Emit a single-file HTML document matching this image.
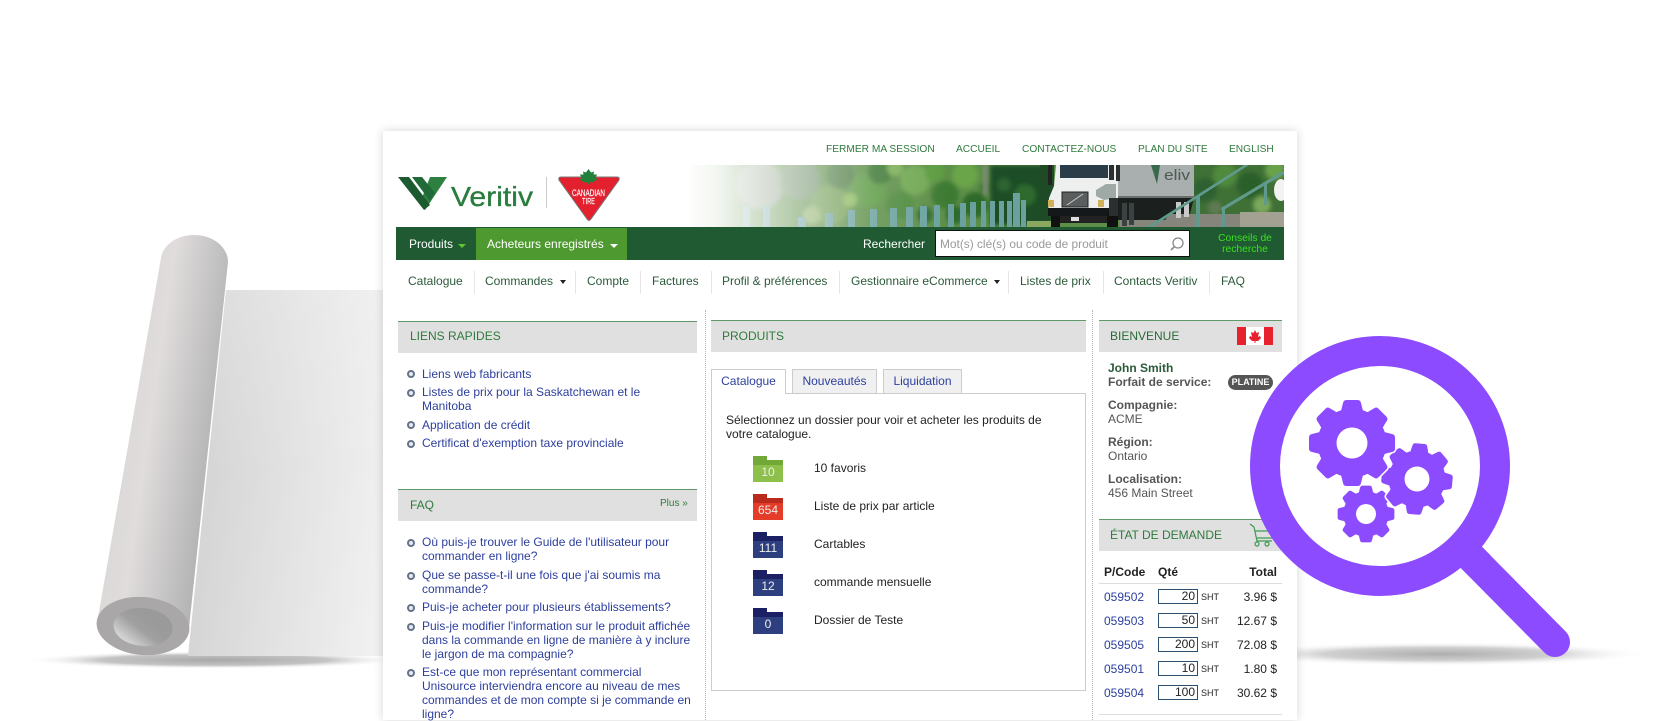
<!DOCTYPE html>
<html lang="fr"><head><meta charset="utf-8"><title>Veritiv</title>
<style>
html,body{margin:0;padding:0;background:#fff}
body{width:1680px;height:720px;overflow:hidden;position:relative;font-family:"Liberation Sans",Arial,sans-serif;font-size:12px;color:#222}
svg{position:absolute;left:0;top:0}
#panel{position:absolute;left:383px;top:131px;width:914px;height:589px;background:#fff;box-shadow:0 0 9px rgba(0,0,0,.17)}
#c{position:absolute;left:0;top:0;width:1680px;height:720px;filter:blur(.3px)}
.t{position:absolute;white-space:nowrap;line-height:14px}
.top{font-size:10.2px;color:#2f7a3d;line-height:12px;top:144px}
.nav{font-size:12px;color:#2a5a3a;top:274px}
.sep{position:absolute;width:1px;top:271px;height:23px;background:#e6e6e6}
.hd{position:absolute;background:#e0e0e0;border-top:1px solid #5f9b68;height:31px}
.ht{font-size:12px;color:#2f7a3d;position:absolute;white-space:nowrap;line-height:14px}
.l{color:#2d3f9e;font-size:12px}
.b{position:absolute;width:4px;height:4px;border:2px solid #64738a;border-radius:50%;background:#e6ebf2}
.dot{position:absolute;top:310px;height:410px;width:0;border-left:1px dotted #b5b5b5}
.tab{position:absolute;top:369px;height:23px;background:#f0f0f0;border:1px solid #ccc;border-bottom:none;color:#2d3f9e;text-align:center;line-height:23px;font-size:12px;box-sizing:content-box}
.f{position:absolute;left:753px;width:30px;height:22px;color:#eee;text-align:center;font-size:12px;line-height:24px}
.f i{position:absolute;left:0;top:-4px;width:14px;height:4px}
.f b{position:absolute;left:0;top:0;width:30px;height:5px}
.f span{position:relative}
.g i,.g b{background:#72a838}.g{background:#8cc04b}
.r i,.r b{background:#b92b1c}.r{background:#e53c29}
.n i,.n b{background:#1b1f63}.n{background:#2e3f80}
.lab{left:814px;font-size:12px;color:#222}
.s{font-weight:bold;color:#555;font-size:12px}
.v{color:#555;font-size:12px}
.code{left:1104px;color:#2d3f9e;font-size:12px}
.inp{position:absolute;left:1158px;width:38px;height:13px;border:1px solid #2b4d6e;font-size:12px;line-height:13px;text-align:right;color:#222}
.inp span{padding-right:2px}
.sht{left:1201px;font-size:9px;color:#222}
.tot{right:403px;font-size:12px;color:#222}
</style></head><body>

<svg width="1680" height="720" viewBox="0 0 1680 720">
<defs>
<filter id="bl" x="-20%" y="-200%" width="140%" height="500%"><feGaussianBlur stdDeviation="3"/></filter>
<linearGradient id="sheet" gradientUnits="userSpaceOnUse" x1="190" y1="500" x2="383" y2="520"><stop offset="0" stop-color="#d3d3d3"/><stop offset=".5" stop-color="#e2e2e2"/><stop offset="1" stop-color="#f0f0f0"/></linearGradient>
<linearGradient id="sheetT" x1="0" y1="0" x2="0" y2="1"><stop offset="0" stop-color="#fff" stop-opacity=".22"/><stop offset=".5" stop-color="#fff" stop-opacity="0"/></linearGradient>
<linearGradient id="tube" gradientUnits="userSpaceOnUse" x1="120" y1="440" x2="211" y2="453"><stop offset="0" stop-color="#dbd8d8"/><stop offset=".3" stop-color="#e0dcdc"/><stop offset=".6" stop-color="#cdcbcb"/><stop offset="1" stop-color="#b5b5b5"/></linearGradient>
<linearGradient id="hole" x1="0" y1="1" x2="1" y2="0"><stop offset="0" stop-color="#f2f2f2"/><stop offset=".45" stop-color="#a0a0a0"/><stop offset=".6" stop-color="#9b9b9b"/><stop offset="1" stop-color="#999"/></linearGradient>
<radialGradient id="shL"><stop offset="0" stop-color="#a8a8a8"/><stop offset=".6" stop-color="#c4c4c4"/><stop offset="1" stop-color="#fff" stop-opacity="0"/></radialGradient>
<radialGradient id="shR"><stop offset="0" stop-color="#aeaeae"/><stop offset=".55" stop-color="#d0d0d0"/><stop offset="1" stop-color="#fff" stop-opacity="0"/></radialGradient>
</defs>
<ellipse cx="215" cy="660" rx="190" ry="9" fill="url(#shL)"/>
<polygon points="226,290 383,290 383,656 188,656" fill="url(#sheet)"/>
<polygon points="226,290 383,290 383,656 188,656" fill="url(#sheetT)"/>
<path d="M161 258C163 245 177 235 194 235C213 235 228 247 228 262L189 628L97 623Z" fill="url(#tube)"/>
<ellipse cx="143" cy="626" rx="46.5" ry="29" fill="#a9a7a7" transform="rotate(5 143 626)"/>
<ellipse cx="143" cy="627" rx="29.5" ry="19" fill="url(#hole)" transform="rotate(5 143 627)"/>
<ellipse cx="1440" cy="654" rx="210" ry="12" fill="url(#shR)"/>
</svg>

<div id="panel"></div>
<div id="c">
<!-- top links -->
<div class="t top" style="left:826px">FERMER MA SESSION</div>
<div class="t top" style="left:956px">ACCUEIL</div>
<div class="t top" style="left:1022px">CONTACTEZ-NOUS</div>
<div class="t top" style="left:1138px">PLAN DU SITE</div>
<div class="t top" style="left:1229px">ENGLISH</div>

<!-- logo + banner -->
<svg width="1680" height="720" viewBox="0 0 1680 720">
<defs>
<linearGradient id="fade" gradientUnits="userSpaceOnUse" x1="686" y1="0" x2="950" y2="0"><stop offset="0" stop-color="#fff"/><stop offset=".12" stop-color="#fff" stop-opacity=".92"/><stop offset=".4" stop-color="#fff" stop-opacity=".55"/><stop offset=".72" stop-color="#fff" stop-opacity=".15"/><stop offset="1" stop-color="#fff" stop-opacity="0"/></linearGradient>
<clipPath id="bn"><rect x="686" y="165" width="598" height="62"/></clipPath>
<filter id="sb"><feGaussianBlur stdDeviation="2"/></filter>
<filter id="sb2"><feGaussianBlur stdDeviation=".6"/></filter>
</defs>
<polygon points="430,177 447,177 425,210 420,203" fill="#2e8040"/>
<polygon points="398,177 409,177 430,205 424,210" fill="#1c5b30"/>
<polygon points="412,177 422,177 435,193 430,201" fill="#1f6a36"/>
<text x="451" y="206" font-family="Liberation Sans" font-size="28" fill="#2a7d3f" stroke="#2a7d3f" stroke-width=".35" textLength="82" lengthAdjust="spacingAndGlyphs">Veritiv</text>
<rect x="546" y="177" width="1" height="31" fill="#ccc"/>
<path d="M561 177H617Q620 177 619 180L591 219Q589 222 587 219L559 180Q558 177 561 177Z" fill="#e5202e" stroke="#777" stroke-width="1"/>
<path d="M588.500 169L591 172.500L594 171.500L593.500 174.500L597 174.500L595.500 178L597.500 179.500L592.500 182.500L589.300 182V184H587.700V182L584.500 182.500L579.500 179.500L581.500 178L580 174.500L583.500 174.500L583 171.500L586 172.500Z" fill="#22803a"/>
<text x="572" y="196" font-family="Liberation Sans" font-size="9.500" fill="#fff" stroke="#fff" stroke-width=".15" textLength="33" lengthAdjust="spacingAndGlyphs">CANADIAN</text>
<text x="582" y="204" font-family="Liberation Sans" font-size="8.500" fill="#fff" stroke="#fff" stroke-width=".15" textLength="13" lengthAdjust="spacingAndGlyphs">TIRE</text>

<g clip-path="url(#bn)">
<rect x="686" y="165" width="598" height="62" fill="#5d8f48"/>
<g filter="url(#sb)">
<circle cx="760" cy="185" r="24" fill="#8d9f86"/><circle cx="800" cy="180" r="20" fill="#6e8f68"/><circle cx="830" cy="205" r="20" fill="#6f9c52"/>
<circle cx="840" cy="175" r="14" fill="#4f7d45"/><circle cx="868" cy="190" r="18" fill="#5d9a44"/><circle cx="880" cy="172" r="12" fill="#3f7a38"/>
<circle cx="900" cy="205" r="14" fill="#4d8a3e"/><circle cx="915" cy="180" r="15" fill="#71a852"/><circle cx="935" cy="172" r="10" fill="#5c9b3f"/>
<circle cx="945" cy="195" r="14" fill="#3e7a30"/><circle cx="965" cy="175" r="13" fill="#6ba548"/><circle cx="975" cy="205" r="13" fill="#2e6b2c"/>
<circle cx="812" cy="215" r="9" fill="#8fb06b"/><circle cx="850" cy="200" r="7" fill="#8ab95d"/><circle cx="925" cy="215" r="8" fill="#2f6a30"/>
<circle cx="955" cy="215" r="9" fill="#2f6b2f"/><circle cx="895" cy="168" r="8" fill="#7db059"/><circle cx="985" cy="188" r="6" fill="#477a3a"/>
</g>
<rect x="983" y="165" width="6" height="30" fill="#7f8c74" filter="url(#sb)"/>
<rect x="990" y="165" width="62" height="60" fill="#1f4d25" filter="url(#sb)"/>
<g filter="url(#sb)"><circle cx="1025" cy="195" r="11" fill="#2f6a2f"/><circle cx="1004" cy="185" r="7" fill="#2e6430"/></g>
<rect x="1027" y="221" width="28" height="6" fill="#8aa860"/>
<rect x="1040" y="165" width="14" height="55" fill="#1e4a25"/>
<rect x="1190" y="165" width="94" height="50" fill="#3f7035"/>
<g filter="url(#sb)"><circle cx="1205" cy="190" r="12" fill="#2f6030"/><circle cx="1225" cy="175" r="12" fill="#4f8a3e"/><circle cx="1250" cy="185" r="13" fill="#2c5e2a"/><circle cx="1275" cy="170" r="10" fill="#6ba24c"/><circle cx="1262" cy="205" r="9" fill="#7aa75a"/><circle cx="1215" cy="208" r="7" fill="#5e7a52"/></g>
<rect x="1120" y="214" width="164" height="13" fill="#85857c"/>
<rect x="1240" y="212" width="44" height="15" fill="#a3a292"/>
<g fill="#6aa19f">
<rect x="743" y="206" width="7" height="21"/><rect x="763" y="206" width="7" height="21"/><rect x="798" y="217" width="8" height="10"/><rect x="825" y="213" width="8" height="14"/><rect x="848" y="210" width="7" height="17"/><rect x="870" y="209" width="7" height="18"/><rect x="890" y="208" width="7" height="19"/><rect x="906" y="207" width="7" height="20"/><rect x="920" y="206" width="7" height="21"/><rect x="934" y="205" width="6" height="22"/><rect x="948" y="204" width="6" height="23"/><rect x="960" y="203" width="6" height="24"/><rect x="970" y="202" width="6" height="25"/><rect x="981" y="201" width="5" height="26"/><rect x="990" y="201" width="5" height="26"/><rect x="999" y="201" width="5" height="26"/><rect x="1007" y="201" width="5" height="26"/><rect x="1013" y="193" width="7" height="34"/><rect x="1021" y="200" width="5" height="27"/></g>
<!-- trailer -->
<rect x="1116" y="165" width="78" height="33" fill="#a9aeae"/>
<path d="M1151 165L1157 184L1160 165Z" fill="#37694a"/>
<text x="1164" y="180" font-family="Liberation Sans" font-size="15" fill="#4b5a52" textLength="26" lengthAdjust="spacingAndGlyphs">eliv</text>
<rect x="1116" y="196" width="78" height="2" fill="#6a6e6c"/>
<path d="M1118 198H1194L1190 214H1170L1165 220H1118Z" fill="#1b1f1e"/>
<rect x="1122" y="203" width="5" height="23" fill="#3a4342"/><rect x="1129" y="203" width="5" height="22" fill="#3a4342"/>
<rect x="1176" y="202" width="5" height="16" fill="#c9c9c9"/><rect x="1184" y="202" width="5" height="15" fill="#c9c9c9"/>
<!-- cab -->
<path d="M1056 165H1118V205L1116 214H1048L1049 198L1054 186Z" fill="#eef0f0"/>
<rect x="1060" y="165" width="48" height="13" fill="#2a3c48"/>
<rect x="1048" y="165" width="4" height="20" fill="#222"/><rect x="1109" y="165" width="5" height="15" fill="#2a2f30"/><rect x="1116" y="165" width="4" height="16" fill="#2a2f30"/>
<rect x="1062" y="192" width="26" height="15" fill="#5a5e5f" stroke="#222" stroke-width="1"/>
<path d="M1067 205L1083 194" stroke="#ccc"/>
<rect x="1048" y="208" width="70" height="8" fill="#15181a"/>
<rect x="1059" y="216" width="50" height="7" fill="#222"/>
<rect x="1051" y="216" width="9" height="11" fill="#111"/>
<rect x="1107" y="214" width="11" height="13" fill="#111"/>
<rect x="1071" y="217" width="8" height="4" fill="#ddd"/>
<rect x="1048" y="200" width="6" height="7" fill="#d3b15a"/><rect x="1098" y="200" width="6" height="7" fill="#d3b15a"/>
<path d="M1096 190L1106 184H1116V198L1104 200L1096 196Z" fill="#9fa9a6"/>
<rect x="1109" y="198" width="9" height="18" fill="#2b2f30"/>
<g fill="#5f9a8c">
<polygon points="1147,227 1244,165 1249,165 1152,227"/>
<rect x="1196" y="196" width="4" height="31"/>
<polygon points="1221,208 1281,172 1284,172 1284,174 1222,211"/>
<rect x="1222" y="207" width="3" height="20"/><rect x="1264" y="183" width="3" height="22"/>
</g>
<ellipse cx="1281" cy="190" rx="7" ry="11" fill="#f3f3f3"/>
<rect x="686" y="165" width="266" height="62" fill="url(#fade)"/>
</g>
</svg>

<!-- green bar -->
<div style="position:absolute;left:396px;top:227px;width:888px;height:33px;background:#1f5a33"></div>
<div style="position:absolute;left:476px;top:228px;width:151px;height:32px;background:#4e9a31"></div>
<div class="t" style="left:409px;top:237px;color:#fff;font-size:12px">Produits</div>
<div style="position:absolute;left:458px;top:244px;border:4px solid transparent;border-top:4px solid #5fc42f;border-bottom:0"></div>
<div class="t" style="left:487px;top:237px;color:#fff;font-size:12px">Acheteurs enregistrés</div>
<div style="position:absolute;left:610px;top:244px;border:4px solid transparent;border-top:4px solid #fff;border-bottom:0"></div>
<div class="t" style="left:863px;top:237px;color:#fff;font-size:12px">Rechercher</div>
<div style="position:absolute;left:935px;top:230px;width:253px;height:25px;background:#fff;border:1px solid #111"></div>
<div class="t" style="left:940px;top:237px;color:#999;font-size:11.900px">Mot(s) clé(s) ou code de produit</div>
<svg width="1680" height="720" viewBox="0 0 1680 720"><circle cx="1178" cy="243" r="5" fill="none" stroke="#888" stroke-width="1.3"/><path d="M1174 247L1171 250" stroke="#888" stroke-width="1.6"/></svg>
<div class="t" style="left:1212px;top:233px;width:66px;text-align:center;color:#3ee01f;font-size:10.300px;line-height:11px;white-space:normal">Conseils de recherche</div>

<!-- nav -->
<div class="t nav" style="left:408px">Catalogue</div><div class="sep" style="left:474px"></div>
<div class="t nav" style="left:485px">Commandes</div><div style="position:absolute;left:560px;top:280px;border:3.500px solid transparent;border-top:4px solid #222;border-bottom:0"></div><div class="sep" style="left:575px"></div>
<div class="t nav" style="left:587px">Compte</div><div class="sep" style="left:640px"></div>
<div class="t nav" style="left:652px">Factures</div><div class="sep" style="left:711px"></div>
<div class="t nav" style="left:722px">Profil &amp; préférences</div><div class="sep" style="left:839px"></div>
<div class="t nav" style="left:851px">Gestionnaire eCommerce</div><div style="position:absolute;left:994px;top:280px;border:3.500px solid transparent;border-top:4px solid #222;border-bottom:0"></div><div class="sep" style="left:1008px"></div>
<div class="t nav" style="left:1020px">Listes de prix</div><div class="sep" style="left:1103px"></div>
<div class="t nav" style="left:1114px">Contacts Veritiv</div><div class="sep" style="left:1209px"></div>
<div class="t nav" style="left:1221px">FAQ</div>

<div class="dot" style="left:705px"></div>
<div class="dot" style="left:1092px"></div>

<!-- left -->
<div class="hd" style="left:398px;top:321px;width:299px"></div>
<div class="ht" style="left:410px;top:329px">LIENS RAPIDES</div>
<div class="b" style="left:407px;top:370px"></div><div class="t l" style="left:422px;top:367px">Liens web fabricants</div>
<div class="b" style="left:407px;top:389px"></div><div class="t l" style="left:422px;top:385px">Listes de prix pour la Saskatchewan et le<br>Manitoba</div>
<div class="b" style="left:407px;top:421px"></div><div class="t l" style="left:422px;top:418px">Application de crédit</div>
<div class="b" style="left:407px;top:440px"></div><div class="t l" style="left:422px;top:436px">Certificat d'exemption taxe provinciale</div>

<div class="hd" style="left:398px;top:489px;width:299px"></div>
<div class="ht" style="left:410px;top:498px">FAQ</div>
<div class="t" style="left:660px;top:497px;font-size:10px;color:#2f7a3d">Plus »</div>
<div class="b" style="left:407px;top:539px"></div><div class="t l" style="left:422px;top:535px">Où puis-je trouver le Guide de l'utilisateur pour<br>commander en ligne?</div>
<div class="b" style="left:407px;top:572px"></div><div class="t l" style="left:422px;top:568px">Que se passe-t-il une fois que j'ai soumis ma<br>commande?</div>
<div class="b" style="left:407px;top:604px"></div><div class="t l" style="left:422px;top:600px">Puis-je acheter pour plusieurs établissements?</div>
<div class="b" style="left:407px;top:623px"></div><div class="t l" style="left:422px;top:619px">Puis-je modifier l'information sur le produit affichée<br>dans la commande en ligne de manière à y inclure<br>le jargon de ma compagnie?</div>
<div class="b" style="left:407px;top:669px"></div><div class="t l" style="left:422px;top:665px">Est-ce que mon représentant commercial<br>Unisource interviendra encore au niveau de mes<br>commandes et de mon compte si je commande en<br>ligne?</div>

<!-- center -->
<div class="hd" style="left:711px;top:320px;width:375px"></div>
<div class="ht" style="left:722px;top:329px">PRODUITS</div>
<div style="position:absolute;left:711px;top:393px;width:373px;height:296px;border:1px solid #ccc"></div>
<div class="tab" style="left:711px;width:73px;background:#fff;height:24px;z-index:2">Catalogue</div>
<div class="tab" style="left:792px;width:83px">Nouveautés</div>
<div class="tab" style="left:883px;width:77px">Liquidation</div>
<div class="t" style="left:726px;top:413px;font-size:12px">Sélectionnez un dossier pour voir et acheter les produits de<br>votre catalogue.</div>

<div class="f g" style="top:460px"><i></i><b></b><span>10</span></div><div class="t lab" style="top:461px">10 favoris</div>
<div class="f r" style="top:498px"><i></i><b></b><span>654</span></div><div class="t lab" style="top:499px">Liste de prix par article</div>
<div class="f n" style="top:536px"><i></i><b></b><span>111</span></div><div class="t lab" style="top:537px">Cartables</div>
<div class="f n" style="top:574px"><i></i><b></b><span>12</span></div><div class="t lab" style="top:575px">commande mensuelle</div>
<div class="f n" style="top:612px"><i></i><b></b><span>0</span></div><div class="t lab" style="top:613px">Dossier de Teste</div>

<!-- right -->
<div class="hd" style="left:1099px;top:320px;width:183px"></div>
<div class="ht" style="left:1110px;top:329px;color:#2a6a3a">BIENVENUE</div>
<svg width="1680" height="720" viewBox="0 0 1680 720">
<rect x="1237" y="327" width="36" height="18" fill="#fff"/><rect x="1237" y="327" width="9" height="18" fill="#e8212e"/><rect x="1264" y="327" width="9" height="18" fill="#e8212e"/>
<path d="M1255 330L1256.500 333L1259 332L1258 337L1260 336L1261 338L1258 341H1255.500V343H1254.500V341H1252L1249 338L1250 336L1252 337L1251 332L1253.500 333Z" fill="#e8212e"/>
</svg>
<div class="t" style="left:1108px;top:361px;font-weight:bold;color:#2a5a3a;font-size:12px">John Smith</div>
<div class="t s" style="left:1108px;top:375px">Forfait de service:</div>
<div style="position:absolute;left:1228px;top:375px;width:45px;height:15px;border-radius:8px;background:#555;color:#fff;font-size:9px;font-weight:bold;text-align:center;line-height:15px">PLATINE</div>
<div class="t s" style="left:1108px;top:398px">Compagnie:</div><div class="t v" style="left:1108px;top:412px">ACME</div>
<div class="t s" style="left:1108px;top:435px">Région:</div><div class="t v" style="left:1108px;top:449px">Ontario</div>
<div class="t s" style="left:1108px;top:472px">Localisation:</div><div class="t v" style="left:1108px;top:486px">456 Main Street</div>

<div class="hd" style="left:1099px;top:519px;width:183px"></div>
<div class="ht" style="left:1110px;top:528px">ÉTAT DE DEMANDE</div>
<svg width="1680" height="720" viewBox="0 0 1680 720"><g fill="none" stroke="#3f9a55" stroke-width="1.200"><path d="M1250 524L1254 527L1257 541H1272"/><path d="M1255 531H1275L1272 538H1257"/><circle cx="1257" cy="544" r="2"/><circle cx="1267" cy="544" r="2"/></g></svg>
<div class="t" style="left:1104px;top:565px;font-weight:bold;color:#222">P/Code</div>
<div class="t" style="left:1158px;top:565px;font-weight:bold;color:#222">Qté</div>
<div class="t tot" style="top:565px;font-weight:bold">Total</div>
<div style="position:absolute;left:1099px;top:583px;width:183px;height:1px;background:#ddd"></div>

<div class="t code" style="top:590px">059502</div><div class="inp" style="top:589px"><span>20</span></div><div class="t sht" style="top:590px">SHT</div><div class="t tot" style="top:590px">3.96 $</div>
<div class="t code" style="top:614px">059503</div><div class="inp" style="top:613px"><span>50</span></div><div class="t sht" style="top:614px">SHT</div><div class="t tot" style="top:614px">12.67 $</div>
<div class="t code" style="top:638px">059505</div><div class="inp" style="top:637px"><span>200</span></div><div class="t sht" style="top:638px">SHT</div><div class="t tot" style="top:638px">72.08 $</div>
<div class="t code" style="top:662px">059501</div><div class="inp" style="top:661px"><span>10</span></div><div class="t sht" style="top:662px">SHT</div><div class="t tot" style="top:662px">1.80 $</div>
<div class="t code" style="top:686px">059504</div><div class="inp" style="top:685px"><span>100</span></div><div class="t sht" style="top:686px">SHT</div><div class="t tot" style="top:686px">30.62 $</div>
<div style="position:absolute;left:1099px;top:714px;width:183px;height:1px;background:#ddd"></div>

<!-- magnifier -->
<svg width="1680" height="720" viewBox="0 0 1680 720">
<defs>
<path id="tooth" d="M-11.500 -30L-9 -40Q-8.500 -43 -5.500 -43H5.500Q8.500 -43 9 -40L11.500 -30Z"/>
<g id="gear"><circle r="34.500"/>
<use href="#tooth"/><use href="#tooth" transform="rotate(45)"/><use href="#tooth" transform="rotate(90)"/><use href="#tooth" transform="rotate(135)"/><use href="#tooth" transform="rotate(180)"/><use href="#tooth" transform="rotate(225)"/><use href="#tooth" transform="rotate(270)"/><use href="#tooth" transform="rotate(315)"/>
</g></defs>
<circle cx="1380" cy="466" r="115" fill="#fff" stroke="#8c4bff" stroke-width="30"/>
<path d="M1465 551L1555 642" stroke="#8c4bff" stroke-width="30" stroke-linecap="round" fill="none"/>
<path d="M1462 548L1480 566" stroke="#8c4bff" stroke-width="30" fill="none"/>
<g fill="#8c4bff">
<use href="#gear" transform="translate(1366 514) scale(.66)"/>
<use href="#gear" transform="translate(1417 479) scale(.825) rotate(5)" stroke="#fff" stroke-width="4"/>
<use href="#gear" transform="translate(1417 479) scale(.825) rotate(5)"/>
<use href="#gear" transform="translate(1352 443)" stroke="#fff" stroke-width="3"/>
<use href="#gear" transform="translate(1352 443)"/>
</g>
<circle cx="1352" cy="443" r="15.500" fill="#fff"/>
<circle cx="1417" cy="479" r="12.500" fill="#fff"/>
<circle cx="1366" cy="514" r="10" fill="#fff"/>
</svg>
</div>
</body></html>
